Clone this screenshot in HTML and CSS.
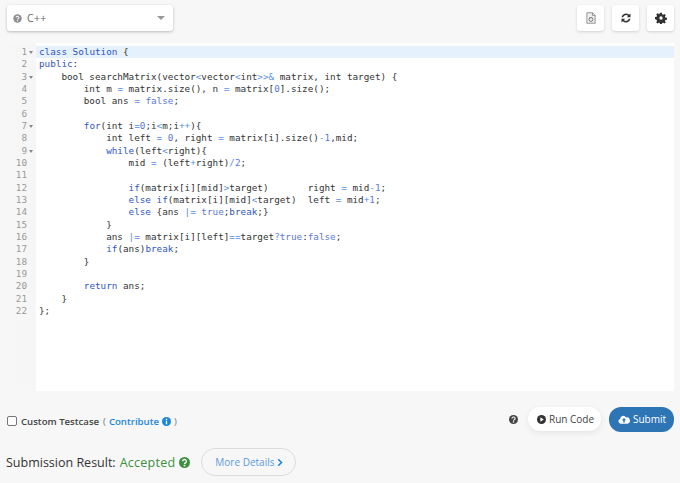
FILE: index.html
```html
<!DOCTYPE html>
<html lang="en">

<head>
    <meta charset="UTF-8">
    <title>Submission</title>
    <link rel="stylesheet" href="styles.css">
</head>

<body>
    <div class="toolbar">
        <div class="langSelect">
            <svg class="icon helpIcon" viewBox="0 0 16 16"><circle cx="8" cy="8" r="7.5" fill="#8f8f8f"/><path d="M5.6 6.2a2.4 2.2 0 1 1 3.6 2c-.8.5-1.2.8-1.2 1.6" fill="none" stroke="#f7f7f7" stroke-width="1.8"/><rect x="7" y="11" width="2" height="2" fill="#f7f7f7"/></svg>
            <span class="langName">C++</span>
            <span class="caret"></span>
        </div>
        <div class="toolBtns">
            <div class="toolBtn">
                <svg class="icon" viewBox="0 0 14 16"><path d="M1.5 1h7.5l3.5 3.5V15h-11z M9 1v3.5h3.5" fill="#eee" stroke="#777" stroke-width="1"/><circle cx="7" cy="10" r="2.6" fill="none" stroke="#666" stroke-width="1.1"/><path d="M4.5 7.5h4" stroke="#888"/></svg>
            </div>
            <div class="toolBtn">
                <svg class="icon" viewBox="0 0 16 16"><path d="M2 7a6 6 0 0 1 10.2-3.2L14 2v5H9l1.8-1.8A4 4 0 0 0 4.2 7z M14 9a6 6 0 0 1-10.2 3.2L2 14V9h5l-1.8 1.8A4 4 0 0 0 11.8 9z" fill="#333"/></svg>
            </div>
            <div class="toolBtn">
                <svg class="icon" viewBox="0 0 16 16"><path d="M6.8 1h2.4l.4 2 1.3.6 1.8-1.1 1.7 1.7-1.1 1.8.5 1.3 2.2.5v2.4l-2.2.4-.5 1.3 1.1 1.8-1.7 1.7-1.8-1.1-1.3.5-.4 2.2H6.8l-.4-2.2-1.3-.5-1.8 1.1-1.7-1.7 1.1-1.8-.5-1.3L0 9.200V6.800l2.200-.5.5-1.300-1.100-1.800 1.700-1.700 1.800 1.100 1.300-.6z" fill="#333"/><circle cx="8" cy="8" r="2.200" fill="#fff"/></svg>
            </div>
        </div>
    </div>

    <div class="editor">
        <div class="gutter">
            <div class="num fold">1</div>
            <div class="num">2</div>
            <div class="num fold">3</div>
            <div class="num">4</div>
            <div class="num">5</div>
            <div class="num">6</div>
            <div class="num fold">7</div>
            <div class="num">8</div>
            <div class="num fold">9</div>
            <div class="num">10</div>
            <div class="num">11</div>
            <div class="num">12</div>
            <div class="num">13</div>
            <div class="num">14</div>
            <div class="num">15</div>
            <div class="num">16</div>
            <div class="num">17</div>
            <div class="num">18</div>
            <div class="num">19</div>
            <div class="num">20</div>
            <div class="num">21</div>
            <div class="num">22</div>
        </div>
        <div class="code">
<div class="line activeLine"><span class="kw">class</span> <span class="kw">Solution</span> {</div>
<div class="line"><span class="kw">public</span>:</div>
<div class="line">    bool searchMatrix(vector<span class="op">&lt;</span>vector<span class="op">&lt;</span>int<span class="op">&gt;&gt;&amp;</span> matrix, int target) {</div>
<div class="line">        int m <span class="op">=</span> matrix.size(), n <span class="op">=</span> matrix[<span class="lit">0</span>].size();</div>
<div class="line">        bool ans <span class="op">=</span> <span class="lit">false</span>;</div>
<div class="line"> </div>
<div class="line">        <span class="kw">for</span>(int i<span class="op">=</span><span class="lit">0</span>;i<span class="op">&lt;</span>m;i<span class="op">++</span>){</div>
<div class="line">            int left <span class="op">=</span> <span class="lit">0</span>, right <span class="op">=</span> matrix[i].size()<span class="op">-</span><span class="lit">1</span>,mid;</div>
<div class="line">            <span class="kw">while</span>(left<span class="op">&lt;</span>right){</div>
<div class="line">                mid <span class="op">=</span> (left<span class="op">+</span>right)<span class="op">/</span><span class="lit">2</span>;</div>
<div class="line"> </div>
<div class="line">                <span class="kw">if</span>(matrix[i][mid]<span class="op">&gt;</span>target)       right <span class="op">=</span> mid<span class="op">-</span><span class="lit">1</span>;</div>
<div class="line">                <span class="kw">else</span> <span class="kw">if</span>(matrix[i][mid]<span class="op">&lt;</span>target)  left <span class="op">=</span> mid<span class="op">+</span><span class="lit">1</span>;</div>
<div class="line">                <span class="kw">else</span> {ans <span class="op">|=</span> <span class="lit">true</span>;<span class="kw">break</span>;}</div>
<div class="line">            }</div>
<div class="line">            ans <span class="op">|=</span> matrix[i][left]<span class="op">==</span>target<span class="op">?</span><span class="lit">true</span>:<span class="lit">false</span>;</div>
<div class="line">            <span class="kw">if</span>(ans)<span class="kw">break</span>;</div>
<div class="line">        }</div>
<div class="line"> </div>
<div class="line">        <span class="kw">return</span> ans;</div>
<div class="line">    }</div>
<div class="line">};</div>
        </div>
    </div>

    <div class="actions">
        <label class="testcase">
            <span class="checkbox"></span>
            <b>Custom Testcase</b>
            <span class="paren">(</span>
            <a class="contribute">Contribute</a>
            <svg class="icon infoIcon" viewBox="0 0 16 16"><circle cx="8" cy="8" r="8" fill="#1a85e0"/><rect x="6.800" y="3" width="2.400" height="2.400" fill="#fff"/><rect x="6.800" y="6.500" width="2.400" height="6.500" fill="#fff"/></svg>
            <span class="paren">)</span>
        </label>
        <svg class="icon questionIcon" viewBox="0 0 16 16"><circle cx="8" cy="8" r="8" fill="#444"/><path d="M5.200 6.200a2.800 2.600 0 1 1 4.200 2.300c-.9.500-1.400.8-1.400 1.700" fill="none" stroke="#f7f7f7" stroke-width="2"/><rect x="6.800" y="11.300" width="2.400" height="2.300" fill="#f7f7f7"/></svg>
        <div class="pillBtn runBtn">
            <svg class="icon" viewBox="0 0 16 16"><circle cx="8" cy="8" r="8" fill="#333"/><path d="M6 4.200 12 8l-6 3.800z" fill="#fff"/></svg>
            Run Code
        </div>
        <div class="pillBtn submitBtn">
            <svg class="icon cloudIcon" viewBox="0 0 18 14"><path d="M4 13.500a3.800 3.800 0 0 1-1-7.400A4.800 4.800 0 0 1 12 3.800a4.800 4.800 0 0 1 2.500 9.700z" fill="#fff"/><path d="M9 4.500 5.600 8.200h2.200V11.500h2.400V8.200h2.200z" fill="#2e75b6"/></svg>
            Submit
        </div>
    </div>

    <div class="result">
        <span class="resultLabel">Submission Result:</span>
        <span class="accepted">Accepted</span>
        <svg class="icon okIcon" viewBox="0 0 16 16"><circle cx="8" cy="8" r="8" fill="#3c8f3c"/><path d="M5.200 6.200a2.800 2.600 0 1 1 4.200 2.300c-.9.500-1.400.8-1.400 1.700" fill="none" stroke="#fff" stroke-width="2"/><rect x="6.800" y="11.300" width="2.400" height="2.300" fill="#fff"/></svg>
        <div class="detailsBtn">More Details
            <svg class="icon chevron" viewBox="0 0 10 14"><path d="M2 1.500 7.500 7 2 12.500" fill="none" stroke="#1a85e0" stroke-width="2.600"/></svg>
        </div>
    </div>
</body>

</html>
```

FILE: styles.css
```css
* {
    padding: 0px;
    margin: 0px;
    box-sizing: border-box;
}

body {
    width: 680px;
    height: 483px;
    overflow: hidden;
    background-color: #f7f7f7;
    font-family: "Open Sans", "Noto Sans", sans-serif;
    color: #333;
}

.icon {
    display: block;
    flex: none;
}

.toolbar {
    display: flex;
    justify-content: space-between;
    padding: 5px 6px 0px 7px;
    height: 43px;
}

.langSelect {
    display: flex;
    align-items: center;
    width: 166px;
    height: 26px;
    padding: 0px 8px 0px 6px;
    background-color: #fff;
    border-radius: 3px;
    box-shadow: 0px 1px 3px rgba(0, 0, 0, 0.25);
}

.helpIcon {
    width: 9px;
    height: 9px;
}

.langName {
    flex: 1;
    margin-left: 5px;
    font-size: 10.500px;
    letter-spacing: 0.3px;
    color: #666;
}

.caret {
    width: 0px;
    height: 0px;
    border-left: 4px solid transparent;
    border-right: 4px solid transparent;
    border-top: 4px solid #999;
}

.toolBtns {
    display: flex;
    gap: 8px;
}

.toolBtn {
    display: flex;
    align-items: center;
    justify-content: center;
    width: 27px;
    height: 26px;
    background-color: #fff;
    border-radius: 3px;
    box-shadow: 0px 1px 3px rgba(0, 0, 0, 0.15);
}

.toolBtn .icon {
    width: 12px;
    height: 12px;
}

.editor {
    display: flex;
    width: 665px;
    height: 348px;
    margin-left: 9px;
    padding-top: 3px;
    background-color: #fff;
    font-family: "DejaVu Sans Mono", monospace;
    font-size: 9.3px;
    line-height: 12.33px;
}

.gutter {
    width: 27px;
    margin-top: -3px;
    padding-top: 3px;
    background-color: #f6f6f6;
    color: #999;
    text-align: right;
}

.num {
    position: relative;
    padding-right: 9px;
}

.fold::after {
    content: "";
    position: absolute;
    right: 3px;
    top: 5px;
    border-left: 2px solid transparent;
    border-right: 2px solid transparent;
    border-top: 3px solid #888;
}

.code {
    flex: 1;
    color: #333;
}

.line {
    height: 12.33px;
    padding-left: 3px;
    white-space: pre;
}

.activeLine {
    background-color: #e6f1fe;
}

.kw {
    color: #2f55c4;
}

.op {
    color: #5a8fe0;
}

.lit {
    color: #5a78d8;
}

.actions {
    display: flex;
    align-items: center;
    height: 26px;
    margin-top: 15px;
    padding: 0px 6px 0px 7px;
}

.testcase {
    flex: 1;
    display: flex;
    align-items: center;
    gap: 3px;
    margin-top: 4px;
    font-size: 9.600px;
}

.testcase b {
    margin-left: 1px;
    margin-right: 1px;
    font-weight: 600;
    color: #444;
}

.checkbox {
    width: 10px;
    height: 10px;
    background-color: #fff;
    border: 1px solid #767676;
    border-radius: 2px;
}

.paren {
    color: #777;
}

.contribute {
    font-weight: 600;
    color: #1a85e0;
}

.infoIcon {
    width: 9px;
    height: 9px;
}

.questionIcon {
    width: 9px;
    height: 9px;
    margin-right: 10px;
}

.pillBtn {
    display: flex;
    align-items: center;
    gap: 3px;
    height: 24px;
    border-radius: 12px;
    font-size: 10px;
}

.pillBtn .icon {
    width: 9px;
    height: 9px;
}

.runBtn {
    width: 73px;
    padding-left: 9px;
    margin-right: 8px;
    background-color: #fff;
    color: #444;
    box-shadow: 0px 2px 6px rgba(0, 0, 0, 0.08);
}

.submitBtn {
    width: 65px;
    height: 25px;
    padding-left: 9px;
    background-color: #2e75b6;
    color: #fff;
}

.pillBtn .cloudIcon {
    width: 12px;
    height: 9px;
}

.result {
    display: flex;
    align-items: center;
    height: 28px;
    margin-top: 16px;
    padding-left: 6px;
    font-size: 12.500px;
}

.resultLabel {
    color: #333;
}

.accepted {
    margin-left: 4px;
    letter-spacing: 0.25px;
    color: #3c8f3c;
}

.okIcon {
    width: 11px;
    height: 11px;
    margin-left: 4px;
}

.detailsBtn {
    display: flex;
    align-items: center;
    gap: 3px;
    width: 95px;
    height: 28px;
    margin-left: 11px;
    padding-left: 13px;
    border: 1px solid #ddd;
    border-radius: 14px;
    font-size: 10px;
    color: #5a9be0;
}

.chevron {
    width: 6px;
    height: 9px;
}
```
